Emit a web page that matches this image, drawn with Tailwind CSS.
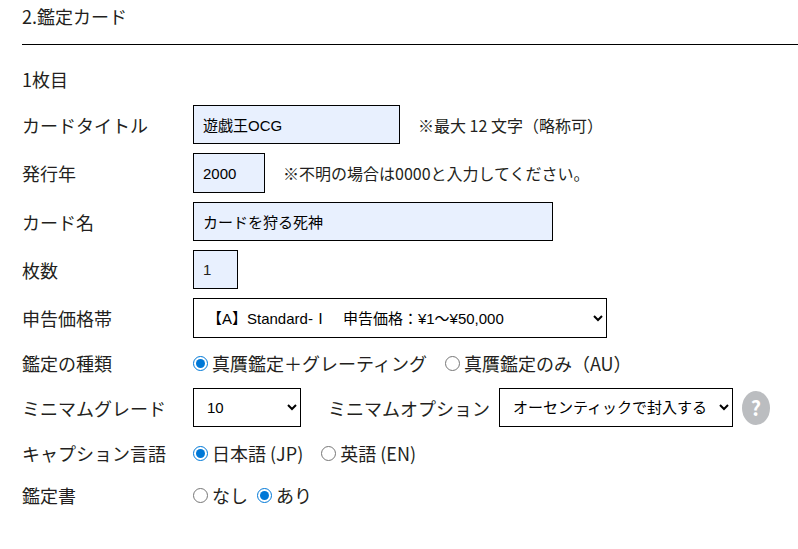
<!DOCTYPE html>
<html lang="ja">

<head>
  <meta charset="UTF-8" />
  <meta name="viewport" content="width=device-width, initial-scale=1.0" />
  <title>鑑定カード</title>
  <script src="https://cdn.jsdelivr.net/npm/@tailwindcss/browser@4"></script>
</head>

<body class="bg-white text-[#231f20] font-['Noto_Sans_CJK_JP',sans-serif] text-[18px] leading-[26px]">
  <form class="pl-[22px] pb-9">
    <h2 class="pt-[3px] pb-[15px] border-b border-black">2.鑑定カード</h2>
    <h3 class="pt-[21px] pb-[13px]">1枚目</h3>

    <div class="flex flex-col gap-[9px]">
      <!-- Card title -->
      <div class="flex items-center h-[39px]">
        <label for="title" class="w-[171px] shrink-0">カードタイトル</label>
        <input id="title" type="text" maxlength="12" value="遊戯王OCG" class="w-[207px] h-full px-[9px] border border-black bg-[#e8f0fe] text-black text-[15px] font-['Liberation_Sans','Noto_Sans_CJK_JP',sans-serif]" />
        <span class="ml-[18px] text-[16px] leading-6">※最大 12 文字（略称可）</span>
      </div>

      <!-- Year -->
      <div class="flex items-center h-10">
        <label for="year" class="w-[171px] shrink-0">発行年</label>
        <input id="year" type="text" value="2000" class="w-[72px] h-full px-[9px] border border-black bg-[#e8f0fe] text-black text-[15px] font-['Liberation_Sans','Noto_Sans_CJK_JP',sans-serif]" />
        <span class="ml-[18px] text-[16px] leading-6">※不明の場合は0000と入力してください。</span>
      </div>

      <!-- Card name -->
      <div class="flex items-center h-[39px]">
        <label for="name" class="w-[171px] shrink-0">カード名</label>
        <input id="name" type="text" value="カードを狩る死神" class="w-[360px] h-full px-[9px] border border-black bg-[#e8f0fe] text-black text-[15px] font-['Liberation_Sans','Noto_Sans_CJK_JP',sans-serif]" />
      </div>

      <!-- Quantity -->
      <div class="flex items-center h-[39px]">
        <label for="count" class="w-[171px] shrink-0">枚数</label>
        <input id="count" type="text" value="1" class="w-[45px] h-full px-[9px] border border-black bg-[#e8f0fe] text-[#231f20] text-[15px] font-['Liberation_Sans','Noto_Sans_CJK_JP',sans-serif]" />
      </div>

      <!-- Price range -->
      <div class="flex items-center h-10">
        <label for="price" class="w-[171px] shrink-0">申告価格帯</label>
        <select id="price" class="w-[414px] h-full pl-[9px] border border-black bg-white text-black text-[15px] font-['Liberation_Sans','Noto_Sans_CJK_JP',sans-serif]">
          <option>【A】Standard-Ⅰ　申告価格：¥1～¥50,000</option>
        </select>
      </div>

      <!-- Type of grading -->
      <div class="flex items-center h-8">
        <span id="type-label" class="w-[171px] shrink-0">鑑定の種類</span>
        <div role="radiogroup" aria-labelledby="type-label" class="flex gap-[18px]">
          <label class="flex items-center gap-1"><input type="radio" name="type" checked class="size-[15px] accent-[#0078d7]" />真贋鑑定＋グレーティング</label>
          <label class="flex items-center gap-1"><input type="radio" name="type" class="size-[15px] accent-[#0078d7]" />真贋鑑定のみ（AU）</label>
        </div>
      </div>

      <!-- Minimum grade -->
      <div class="flex items-center h-[39px]">
        <label for="grade" class="w-[171px] shrink-0">ミニマムグレード</label>
        <select id="grade" class="w-[108px] h-full pl-[9px] border border-black bg-white text-black text-[15px] font-['Liberation_Sans','Noto_Sans_CJK_JP',sans-serif]">
          <option>10</option>
        </select>
        <label for="option" class="ml-[27px] mr-[9px]">ミニマムオプション</label>
        <select id="option" class="w-[234px] h-full px-[9px] border border-black bg-white text-black text-[15px] font-['Liberation_Sans','Noto_Sans_CJK_JP',sans-serif]">
          <option>オーセンティックで封入する</option>
        </select>
        <button type="button" aria-label="ヘルプ" class="ml-[9px] w-7 h-[34px] rounded-[50%] bg-[#bbbdc0] text-white text-[20px] font-bold">?</button>
      </div>

      <!-- Caption language -->
      <div class="flex items-center h-[34px]">
        <span id="lang-label" class="w-[171px] shrink-0">キャプション言語</span>
        <div role="radiogroup" aria-labelledby="lang-label" class="flex gap-[18px]">
          <label class="flex items-center gap-1"><input type="radio" name="lang" checked class="size-[15px] accent-[#0078d7]" />日本語 (JP)</label>
          <label class="flex items-center gap-1"><input type="radio" name="lang" class="size-[15px] accent-[#0078d7]" />英語 (EN)</label>
        </div>
      </div>

      <!-- Certificate -->
      <div class="flex items-center h-8">
        <span id="cert-label" class="w-[171px] shrink-0">鑑定書</span>
        <div role="radiogroup" aria-labelledby="cert-label" class="flex gap-[9px]">
          <label class="flex items-center gap-1"><input type="radio" name="cert" class="size-[15px] accent-[#0078d7]" />なし</label>
          <label class="flex items-center gap-1"><input type="radio" name="cert" checked class="size-[15px] accent-[#0078d7]" />あり</label>
        </div>
      </div>
    </div>
  </form>
</body>

</html>
